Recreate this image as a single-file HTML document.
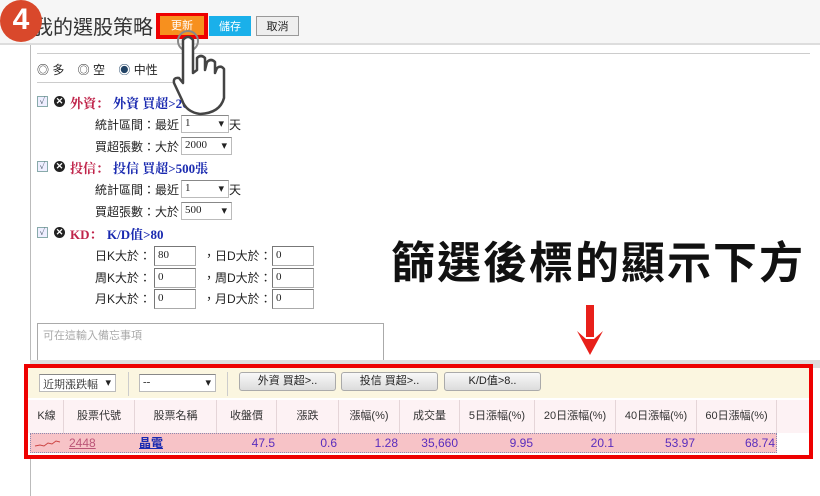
<!DOCTYPE html>
<html><head><meta charset="utf-8"><style>
*{margin:0;padding:0;box-sizing:border-box}
body{width:820px;height:496px;background:#fff;position:relative;overflow:hidden;font-family:"Liberation Serif","Noto Serif CJK SC","Noto Sans CJK TC",serif;font-size:12px;color:#222}
.a{position:absolute}
.sel{position:absolute;border:1px solid #bbb;background:#fff;height:18px;font-size:11px;padding:1px 3px;border-top-color:#888}
.sel:after{content:"▾";position:absolute;right:4px;top:1px;font-size:11px}
.inp{position:absolute;border:1px solid #aaa;border-top-color:#777;border-left-color:#777;background:#fff;height:20px;width:42px;font-size:11px;padding:2px 3px}
.lbl{position:absolute;font-size:12px;font-family:"Liberation Sans","Noto Sans CJK TC",sans-serif}
.cb{position:absolute;width:11px;height:11px;border:1px solid #8aa;background:#eef;font-size:9px;line-height:9px;text-align:center;color:#345}
.x{position:absolute;width:11px;height:11px;border-radius:50%;background:#222;color:#fff;font-size:9px;line-height:11px;text-align:center;font-family:"Liberation Sans",sans-serif;font-weight:bold}
.h{position:absolute;font-weight:bold;font-size:13px}
.btn{position:absolute;height:19px;border:1px solid #aaa;border-radius:3px;background:linear-gradient(#f8f8f8,#dcdcdc);font-size:11px;text-align:center;line-height:17px;font-family:"Liberation Sans","Noto Sans CJK TC",sans-serif}
.th{position:absolute;top:400px;height:33px;line-height:33px;text-align:center;font-size:11px;border-right:1px solid #e5d5d8;font-family:"Liberation Sans","Noto Sans CJK TC",sans-serif;color:#333}
.td{position:absolute;top:434px;height:18px;line-height:18px;text-align:right;padding-right:2px;font-size:12px;color:#5a2dbd;font-family:"Liberation Sans",sans-serif}
</style></head><body>
<div class="a" style="left:0;top:0;width:820px;height:45px;background:#f6f6f6;border-bottom:2px solid #ddd"></div>
<div class="a" style="left:33px;top:11px;font-size:20px;font-family:'Liberation Sans','Noto Sans CJK TC',sans-serif;color:#333">我的選股策略</div>
<div class="a" style="left:0;top:0;width:42px;height:42px;border-radius:50%;background:#d9482b;color:#fff;font-size:30px;font-weight:bold;text-align:center;line-height:40px;font-family:'Liberation Sans',sans-serif">4</div>
<div class="a" style="left:156px;top:13px;width:52px;height:26px;background:#e00;"></div>
<div class="a" style="left:160px;top:16px;width:44px;height:19px;background:#f7901e;color:#fff;font-size:11px;text-align:center;line-height:19px;font-family:'Noto Sans CJK TC',sans-serif">更新</div>
<div class="a" style="left:209px;top:16px;width:42px;height:20px;background:#1ab0ea;color:#fff;font-size:11px;text-align:center;line-height:20px;font-family:'Noto Sans CJK TC',sans-serif">儲存</div>
<div class="a" style="left:256px;top:16px;width:43px;height:20px;background:#eee;border:1px solid #999;font-size:11px;text-align:center;line-height:18px;font-family:'Noto Sans CJK TC',sans-serif">取消</div>
<div class="a" style="left:30px;top:45px;width:1px;height:451px;background:#bbb"></div>
<div class="a" style="left:37px;top:53px;width:773px;height:1px;background:#ccc"></div>
<div class="a" style="left:37px;top:82px;width:170px;height:1px;background:#ccc"></div>
<div class="lbl" style="left:37px;top:61px">◎ 多 &nbsp; &nbsp;◎ 空 &nbsp; &nbsp;<span style="color:#246">◉</span> 中性</div>
<div class="cb" style="left:37px;top:96px">✓</div><div class="x" style="left:54px;top:96px">✕</div>
<div class="h" style="left:70px;top:93px;color:#c0244a">外資：</div><div class="h" style="left:113px;top:93px;color:#1a2ab0">外資 買超&gt;2000張</div>
<div class="lbl" style="left:95px;top:116px">統計區間：最近</div><div class="sel" style="left:181px;top:115px;width:48px">1</div><div class="lbl" style="left:229px;top:116px">天</div>
<div class="lbl" style="left:95px;top:138px">買超張數：大於</div><div class="sel" style="left:181px;top:137px;width:51px">2000</div>
<div class="cb" style="left:37px;top:161px">✓</div><div class="x" style="left:54px;top:161px">✕</div>
<div class="h" style="left:70px;top:158px;color:#c0244a">投信：</div><div class="h" style="left:113px;top:158px;color:#1a2ab0">投信 買超&gt;500張</div>
<div class="lbl" style="left:95px;top:181px">統計區間：最近</div><div class="sel" style="left:181px;top:180px;width:48px">1</div><div class="lbl" style="left:229px;top:181px">天</div>
<div class="lbl" style="left:95px;top:203px">買超張數：大於</div><div class="sel" style="left:181px;top:202px;width:51px">500</div>
<div class="cb" style="left:37px;top:227px">✓</div><div class="x" style="left:54px;top:227px">✕</div>
<div class="h" style="left:70px;top:224px;color:#c0244a">KD：</div><div class="h" style="left:107px;top:224px;color:#1a2ab0">K/D值&gt;80</div>
<div class="lbl" style="left:95px;top:247px">日K大於：</div><div class="inp" style="left:154px;top:246px">80</div><div class="lbl" style="left:203px;top:247px">，日D大於：</div><div class="inp" style="left:272px;top:246px">0</div>
<div class="lbl" style="left:95px;top:269px">周K大於：</div><div class="inp" style="left:154px;top:268px">0</div><div class="lbl" style="left:203px;top:269px">，周D大於：</div><div class="inp" style="left:272px;top:268px">0</div>
<div class="lbl" style="left:95px;top:290px">月K大於：</div><div class="inp" style="left:154px;top:289px">0</div><div class="lbl" style="left:203px;top:290px">，月D大於：</div><div class="inp" style="left:272px;top:289px">0</div>
<div class="a" style="left:37px;top:323px;width:347px;height:40px;border:1px solid #aaa;font-size:11px;color:#aaa;padding:3px 5px;font-family:'Noto Sans CJK TC',sans-serif">可在這輸入備忘事項</div>
<div class="a" style="left:391px;top:232px;font-size:44px;font-weight:bold;color:#111;font-family:'Noto Sans CJK TC',sans-serif;line-height:54px;letter-spacing:2px;white-space:nowrap">篩選後標的顯示下方</div>
<svg class="a" style="left:575px;top:305px" width="30" height="52"><rect x="11" y="0" width="8" height="32" fill="#e8201a"/><path d="M2 26 L15 50 L28 26 L19 34 L11 34Z" fill="#e8201a"/></svg>
<div class="a" style="left:30px;top:360px;width:790px;height:8px;background:#ddd"></div>
<div class="a" style="left:24px;top:364px;width:789px;height:95px;border:4px solid #e00;background:#fff"></div>
<div class="a" style="left:28px;top:368px;width:781px;height:30px;background:#fbf6e0"></div>
<div class="sel" style="left:39px;top:374px;width:77px">近期漲跌幅</div>
<div class="a" style="left:128px;top:372px;width:1px;height:24px;background:#ccc"></div>
<div class="sel" style="left:139px;top:374px;width:77px">--</div>
<div class="a" style="left:227px;top:372px;width:1px;height:24px;background:#ccc"></div>
<div class="btn" style="left:239px;top:372px;width:97px">外資 買超&gt;..</div>
<div class="btn" style="left:341px;top:372px;width:97px">投信 買超&gt;..</div>
<div class="btn" style="left:444px;top:372px;width:97px">K/D值&gt;8..</div>
<div class="a" style="left:28px;top:400px;width:781px;height:33px;background:#fdf2f4"></div>
<div class="th" style="left:30px;width:34px">K線</div><div class="th" style="left:64px;width:71px">股票代號</div><div class="th" style="left:135px;width:82px">股票名稱</div><div class="th" style="left:217px;width:60px">收盤價</div><div class="th" style="left:277px;width:62px">漲跌</div><div class="th" style="left:339px;width:61px">漲幅(%)</div><div class="th" style="left:400px;width:60px">成交量</div><div class="th" style="left:460px;width:75px">5日漲幅(%)</div><div class="th" style="left:535px;width:81px">20日漲幅(%)</div><div class="th" style="left:616px;width:81px">40日漲幅(%)</div><div class="th" style="left:697px;width:80px">60日漲幅(%)</div>
<div class="a" style="left:30px;top:433px;width:747px;height:20px;background:#f7c3c7;border:1px dotted #8a8ab0"></div>
<svg class="a" style="left:34px;top:437px" width="28" height="12"><path d="M1 9 L6 8 L10 9 L14 6 L18 7 L22 4 L26 5" stroke="#c44" fill="none"/></svg>
<div class="a" style="left:69px;top:434px;line-height:18px;font-size:12px;color:#b57;text-decoration:underline;font-family:'Liberation Sans',sans-serif">2448</div>
<div class="a" style="left:139px;top:434px;line-height:18px;font-size:12px;color:#1a2ab0;font-weight:bold;text-decoration:underline;font-family:'Noto Sans CJK TC',sans-serif">晶電</div>
<div class="td" style="left:217px;width:60px">47.5</div><div class="td" style="left:277px;width:62px">0.6</div><div class="td" style="left:339px;width:61px">1.28</div><div class="td" style="left:400px;width:60px">35,660</div><div class="td" style="left:460px;width:75px">9.95</div><div class="td" style="left:535px;width:81px">20.1</div><div class="td" style="left:616px;width:81px">53.97</div><div class="td" style="left:697px;width:80px">68.74</div>
<svg class="a" style="left:170px;top:28px" width="60" height="90"><circle cx="18" cy="13" r="10" fill="none" stroke="#888" stroke-width="2"/><path d="M13 12 Q18 6 23 12 L23 45 L27 42 L27 30 Q31 26 35 30 L35 42 L37 34 Q41 30 45 34 L45 45 L47 40 Q51 37 54 41 L54 70 Q50 85 30 86 Q16 84 12 72 L4 55 Q3 49 9 50 L13 55 Z" fill="#fff" stroke="#444" stroke-width="2.5" stroke-linejoin="round"/></svg>
</body></html>
